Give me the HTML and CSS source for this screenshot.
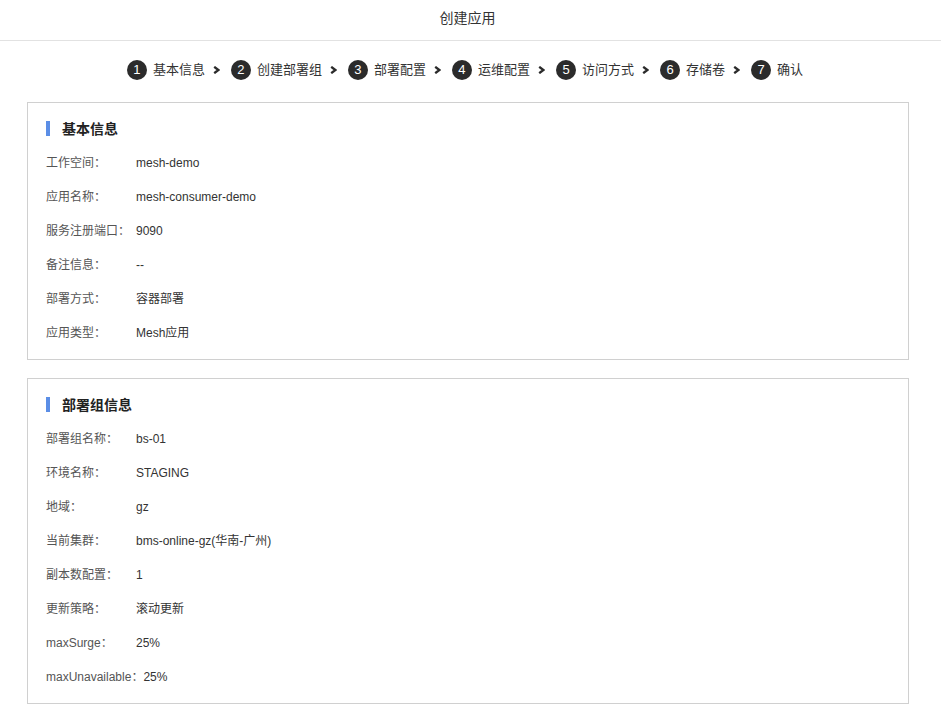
FILE: index.html
```html
<!DOCTYPE html>
<html lang="zh-CN">
<head>
<meta charset="UTF-8" />
<meta name="viewport" content="width=device-width, initial-scale=1" />
<title>创建应用</title>
<link rel="stylesheet" href="styles.css">
</head>
<body>

<div class="header">创建应用</div>

<div class="steps">
  <div class="step"><span class="num">1</span>基本信息</div>
  <svg class="arrow" viewBox="0 0 7 8"><path d="M1.2 0.8 L5.4 4 L1.2 7.2" /></svg>
  <div class="step"><span class="num">2</span>创建部署组</div>
  <svg class="arrow" viewBox="0 0 7 8"><path d="M1.2 0.8 L5.4 4 L1.2 7.2" /></svg>
  <div class="step"><span class="num">3</span>部署配置</div>
  <svg class="arrow" viewBox="0 0 7 8"><path d="M1.2 0.8 L5.4 4 L1.2 7.2" /></svg>
  <div class="step"><span class="num">4</span>运维配置</div>
  <svg class="arrow" viewBox="0 0 7 8"><path d="M1.2 0.8 L5.4 4 L1.2 7.2" /></svg>
  <div class="step"><span class="num">5</span>访问方式</div>
  <svg class="arrow" viewBox="0 0 7 8"><path d="M1.2 0.8 L5.4 4 L1.2 7.2" /></svg>
  <div class="step"><span class="num">6</span>存储卷</div>
  <svg class="arrow" viewBox="0 0 7 8"><path d="M1.2 0.8 L5.4 4 L1.2 7.2" /></svg>
  <div class="step"><span class="num">7</span>确认</div>
</div>

<div class="content">
  <div class="card">
    <div class="card-title">基本信息</div>
    <ul class="info-list">
      <li><span class="label">工作空间：</span><span class="value">mesh-demo</span></li>
      <li><span class="label">应用名称：</span><span class="value">mesh-consumer-demo</span></li>
      <li><span class="label">服务注册端口：</span><span class="value">9090</span></li>
      <li><span class="label">备注信息：</span><span class="value">--</span></li>
      <li><span class="label">部署方式：</span><span class="value">容器部署</span></li>
      <li><span class="label">应用类型：</span><span class="value">Mesh应用</span></li>
    </ul>
  </div>

  <div class="card">
    <div class="card-title">部署组信息</div>
    <ul class="info-list">
      <li><span class="label">部署组名称：</span><span class="value">bs-01</span></li>
      <li><span class="label">环境名称：</span><span class="value">STAGING</span></li>
      <li><span class="label">地域：</span><span class="value">gz</span></li>
      <li><span class="label">当前集群：</span><span class="value">bms-online-gz(华南-广州)</span></li>
      <li><span class="label">副本数配置：</span><span class="value">1</span></li>
      <li><span class="label">更新策略：</span><span class="value">滚动更新</span></li>
      <li><span class="label">maxSurge：</span><span class="value">25%</span></li>
      <li><span class="label">maxUnavailable：</span><span class="value">25%</span></li>
    </ul>
  </div>
</div>

</body>
</html>
```

FILE: styles.css
```css
body {
  font-family: "Liberation Sans", "Noto Sans CJK SC", sans-serif;
  background: #fff;
  color: #333;
  margin: 0;
  padding: 0;
}
.header {
  height: 40px;
  line-height: 37px;
  text-align: center;
  font-size: 14px;
  color: #333;
  padding-right: 6px;
  border-bottom: 1px solid #e2e2e2;
}
.steps {
  display: flex;
  justify-content: center;
  align-items: center;
  margin: 19px 0 22px 0;
  padding-right: 11px;
  height: 20px;
  font-size: 13px;
  color: #333;
}
.step {
  display: flex;
  align-items: center;
  line-height: 18px;
}
.num {
  width: 20px;
  height: 20px;
  border-radius: 50%;
  background: #2b2b2b;
  color: #fff;
  font-size: 13px;
  line-height: 20px;
  text-align: center;
  margin-right: 6px;
}
.arrow {
  width: 7px;
  height: 8px;
  margin: 0 11px 0 8px;
}
.arrow path {
  fill: none;
  stroke: #2b2b2b;
  stroke-width: 2.3;
}
.content {
  padding: 0 32px 10px 27px;
}
.card {
  border: 1px solid #d0d0d0;
  padding: 16px 18px 16px 18px;
  margin-bottom: 18px;
}
.card-title {
  position: relative;
  padding-left: 16px;
  font-size: 14px;
  font-weight: bold;
  line-height: 20px;
  color: #222;
}
.card-title::before {
  content: "";
  position: absolute;
  left: 0;
  top: 2px;
  width: 4px;
  height: 15px;
  background: #5b8ee6;
}
.info-list {
  list-style: none;
  margin: 14px 0 0 0;
  padding: 0;
  display: flex;
  flex-direction: column;
  gap: 14px;
}
.info-list li {
  font-size: 12px;
  line-height: 20px;
  display: flex;
}
.label {
  min-width: 90px;
  color: #555;
}
.value {
  color: #333;
}
```
